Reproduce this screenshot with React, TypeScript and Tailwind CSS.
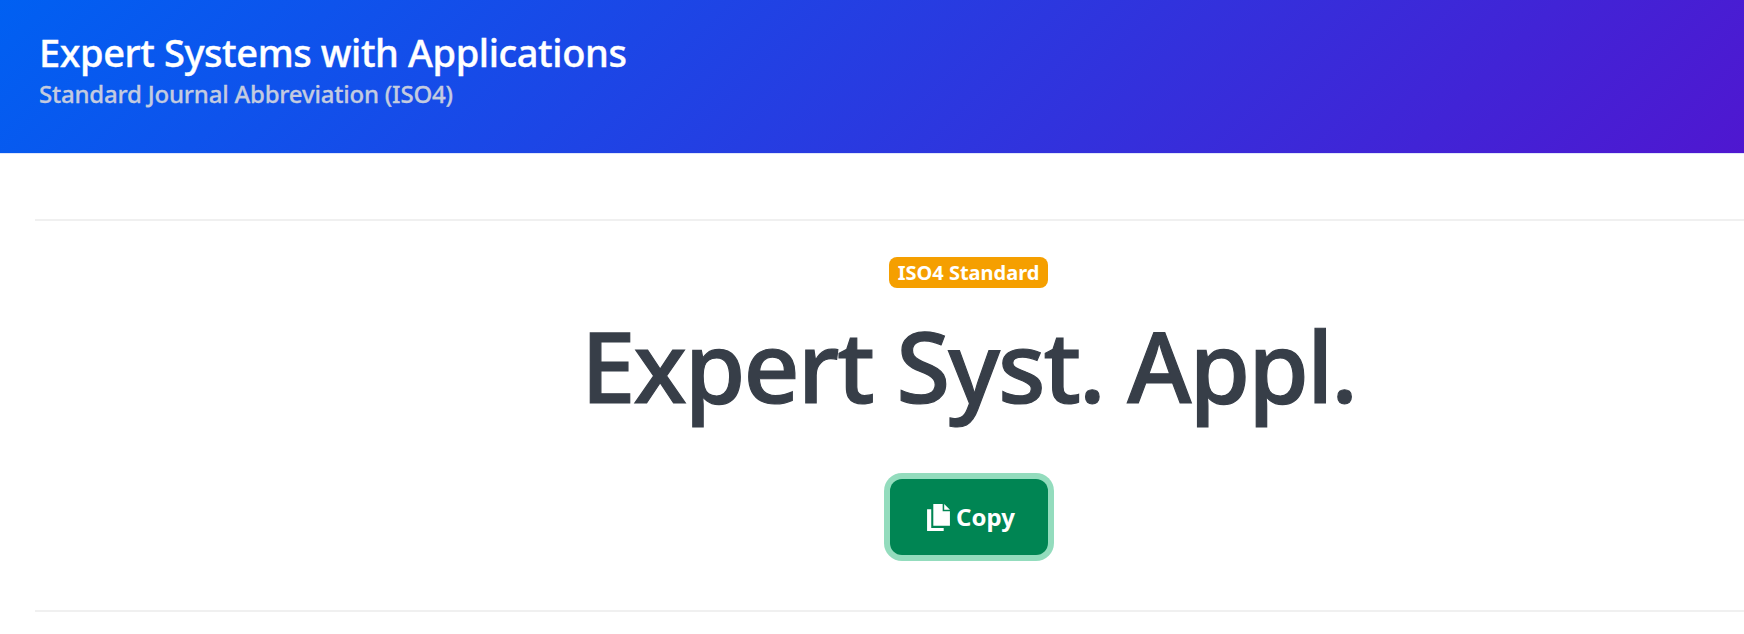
import React from "react";

export default function App() {
  return (
    <div className="h-[634px] bg-white font-['Noto_Sans','Open_Sans',sans-serif] overflow-hidden">
      <header className="h-[154px] bg-[linear-gradient(135deg,#0060f2_0%,#4f17d0_100%)] pl-[39px] pt-[27px] border-b border-[#dfe6fb]">
        <h1 className="text-[38px] leading-[50px] font-medium [-webkit-text-stroke:0.4px_#ffffff] text-white tracking-[-0.4px] whitespace-nowrap">Expert Systems with Applications</h1>
        <p className="mt-[2px] text-[24px] leading-[30px] font-medium [-webkit-text-stroke:0.3px_#c3cbe0] text-[#c3cbe0] tracking-[-0.2px] whitespace-nowrap">Standard Journal Abbreviation (ISO4)</p>
      </header>
      <main className="pl-[35px]">
        <div className="mt-[65px] border-y-2 border-[#f0f0f0] h-[393px] w-[1867px] flex flex-col items-center pt-[36px]">
          <span className="h-[31px] px-[9px] rounded-[8px] bg-[#f59f00] text-white text-[20px] leading-[31px] font-bold whitespace-nowrap">ISO4 Standard</span>
          <h2 className="mt-[17px] text-[98px] leading-[120px] font-medium [-webkit-text-stroke:1.2px_#373e48] text-[#373e48] tracking-[-2px] whitespace-nowrap">Expert Syst. Appl.</h2>
          <button className="mt-[54px] w-[158px] h-[76px] rounded-[12px] bg-[#008553] ring-[6px] ring-[#93dcbd] text-white text-[24px] font-bold flex items-center justify-center gap-[6px] pl-[5px]">
            <svg width="23" height="27" viewBox="0 0 22 26" fill="white"><path d="M6 0h9v7h7v14H6z"/><path d="M16.5 0 22 5.5h-5.5z"/><path d="M0 5h4v18h12v3H0z"/></svg>
            Copy
          </button>
        </div>
      </main>
    </div>
  );
}
